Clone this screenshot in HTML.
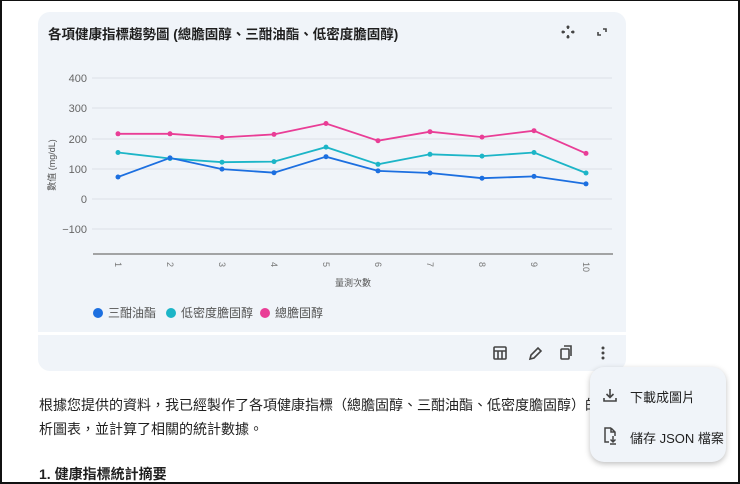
<!DOCTYPE html>
<html><head><meta charset="utf-8"><style>
*{margin:0;padding:0;box-sizing:border-box}
body{width:740px;height:484px;background:#fff;position:relative;overflow:hidden;font-family:"Liberation Sans","Noto Sans CJK TC",sans-serif;color:#1f1f1f}
.frame{position:absolute;left:0;top:0;width:740px;height:484px;border:2px solid #111;border-top-width:1px;pointer-events:none;z-index:10}
.card{position:absolute;left:38px;top:12px;width:588px;height:320px;background:#f0f4f9;border-radius:12px 12px 0 0}
.tool{position:absolute;left:38px;top:335px;width:588px;height:36px;background:#f0f4f9;border-radius:0 0 12px 12px}
.title{position:absolute;left:48px;top:23px;font-size:13.5px;font-weight:bold;color:#1f1f1f}
.p{position:absolute;left:39px;font-size:14px;color:#1f1f1f}
.menu{position:absolute;left:590px;top:367px;width:136px;height:95px;background:#f0f4f9;border-radius:14px;box-shadow:0 2px 6px rgba(0,0,0,.25);font-size:13px;color:#1f1f1f}
.mi{position:absolute;left:40px}
</style></head><body>
<div class="card"></div>
<div class="tool"></div>
<div class="title">各項健康指標趨勢圖 (總膽固醇、三酣油酯、低密度膽固醇)</div>
<svg style="position:absolute;left:0;top:0" width="740" height="484" font-family="Liberation Sans, Noto Sans CJK TC, sans-serif">
<g fill="#444">
<path d="M568 27v2M568 35v2M563 32h2M571 32h2" stroke="#444" stroke-width="1.6"/>
<circle cx="568" cy="27" r="1.5"/><circle cx="568" cy="37" r="1.5"/><circle cx="563" cy="32" r="1.5"/><circle cx="573" cy="32" r="1.5"/>
</g>
<path d="M598 32v3h3M603 29h3v3" stroke="#444" stroke-width="1.6" fill="none"/>
<g stroke="#dde1e6" stroke-width="1">
<line x1="92" y1="78" x2="612" y2="78"/><line x1="92" y1="108" x2="612" y2="108"/><line x1="92" y1="139" x2="612" y2="139"/><line x1="92" y1="169" x2="612" y2="169"/><line x1="92" y1="199" x2="612" y2="199"/><line x1="92" y1="229" x2="612" y2="229"/>
</g>
<line x1="93" y1="254" x2="613" y2="254" stroke="#888" stroke-width="1.5"/>
<g font-size="11" fill="#666" text-anchor="end">
<text x="87" y="82">400</text><text x="87" y="112">300</text><text x="87" y="143">200</text><text x="87" y="173">100</text><text x="87" y="203">0</text><text x="87" y="233">−100</text>
</g>
<text transform="translate(55,165) rotate(-90)" font-size="9" fill="#555" text-anchor="middle">數值 (mg/dL)</text>
<g font-size="9" fill="#777">
<text transform="translate(115,262) rotate(90)">1</text><text transform="translate(167,262) rotate(90)">2</text><text transform="translate(219,262) rotate(90)">3</text><text transform="translate(271,262) rotate(90)">4</text><text transform="translate(323,262) rotate(90)">5</text><text transform="translate(375,262) rotate(90)">6</text><text transform="translate(427,262) rotate(90)">7</text><text transform="translate(479,262) rotate(90)">8</text><text transform="translate(531,262) rotate(90)">9</text><text transform="translate(583,262) rotate(90)">10</text>
</g>
<text x="353" y="286" font-size="9" fill="#555" text-anchor="middle">量測次數</text>
<g fill="none" stroke-width="1.8">
<polyline stroke="#e93d96" points="118,133.8 170,133.8 222,137.4 274,134.4 326,123.5 378,140.7 430,131.7 482,137.1 534,130.7 586,153.4"/>
<polyline stroke="#1cb5c7" points="118,152.5 170,158.5 222,162.2 274,161.6 326,147.1 378,164.3 430,154.3 482,156.1 534,152.5 586,173"/>
<polyline stroke="#1c6fe0" points="118,177 170,157.9 222,169.1 274,172.7 326,156.7 378,170.9 430,173 482,178.2 534,176.4 586,183.9"/>
</g>
<g fill="#e93d96"><circle cx="118" cy="133.8" r="2.5"/><circle cx="170" cy="133.8" r="2.5"/><circle cx="222" cy="137.4" r="2.5"/><circle cx="274" cy="134.4" r="2.5"/><circle cx="326" cy="123.5" r="2.5"/><circle cx="378" cy="140.7" r="2.5"/><circle cx="430" cy="131.7" r="2.5"/><circle cx="482" cy="137.1" r="2.5"/><circle cx="534" cy="130.7" r="2.5"/><circle cx="586" cy="153.4" r="2.5"/></g>
<g fill="#1cb5c7"><circle cx="118" cy="152.5" r="2.5"/><circle cx="170" cy="158.5" r="2.5"/><circle cx="222" cy="162.2" r="2.5"/><circle cx="274" cy="161.6" r="2.5"/><circle cx="326" cy="147.1" r="2.5"/><circle cx="378" cy="164.3" r="2.5"/><circle cx="430" cy="154.3" r="2.5"/><circle cx="482" cy="156.1" r="2.5"/><circle cx="534" cy="152.5" r="2.5"/><circle cx="586" cy="173" r="2.5"/></g>
<g fill="#1c6fe0"><circle cx="118" cy="177" r="2.5"/><circle cx="170" cy="157.9" r="2.5"/><circle cx="222" cy="169.1" r="2.5"/><circle cx="274" cy="172.7" r="2.5"/><circle cx="326" cy="156.7" r="2.5"/><circle cx="378" cy="170.9" r="2.5"/><circle cx="430" cy="173" r="2.5"/><circle cx="482" cy="178.2" r="2.5"/><circle cx="534" cy="176.4" r="2.5"/><circle cx="586" cy="183.9" r="2.5"/></g>
<g font-size="12" fill="#555">
<circle cx="98" cy="313" r="5" fill="#1c6fe0"/><text x="108" y="317">三酣油酯</text>
<circle cx="171" cy="313" r="5" fill="#1cb5c7"/><text x="181" y="317">低密度膽固醇</text>
<circle cx="265" cy="313" r="5" fill="#e93d96"/><text x="275" y="317">總膽固醇</text>
</g>
<g stroke="#444" stroke-width="1.6" fill="none">
<rect x="494" y="347" width="12" height="12" rx="1"/><path d="M494 351h12M498 351v8M502 351v8"/>
<path d="M530 359l1-4 7-7 3 3-7 7z"/>
<rect x="561" y="349" width="8" height="10" rx="1"/><path d="M564 346h7v10"/>
</g>
<g fill="#444"><circle cx="603" cy="348" r="1.5"/><circle cx="603" cy="353" r="1.5"/><circle cx="603" cy="358" r="1.5"/></g>
</svg>
<div class="p" style="top:395px">根據您提供的資料，我已經製作了各項健康指標（總膽固醇、三酣油酯、低密度膽固醇）的趨</div>
<div class="p" style="top:419px">析圖表，並計算了相關的統計數據。</div>
<div class="p" style="top:464px;font-weight:bold;font-size:14px">1. 健康指標統計摘要</div>
<div class="menu">
<svg style="position:absolute;left:12px;top:20px" width="16" height="16"><path d="M8 2v8M4.5 7l3.5 3.5 3.5-3.5M2 11v3h12v-3" stroke="#444" stroke-width="1.6" fill="none"/></svg>
<div class="mi" style="top:20px">下載成圖片</div>
<svg style="position:absolute;left:12px;top:60px" width="16" height="18"><path d="M9 1H3v14h4M9 1l4 4v4M9 1v4h4M11 9v6M8.5 12.5l2.5 2.5 2.5-2.5M8 17h6" stroke="#444" stroke-width="1.5" fill="none"/></svg>
<div class="mi" style="top:61px">儲存 JSON 檔案</div>
</div>
<div class="frame"></div>
</body></html>
